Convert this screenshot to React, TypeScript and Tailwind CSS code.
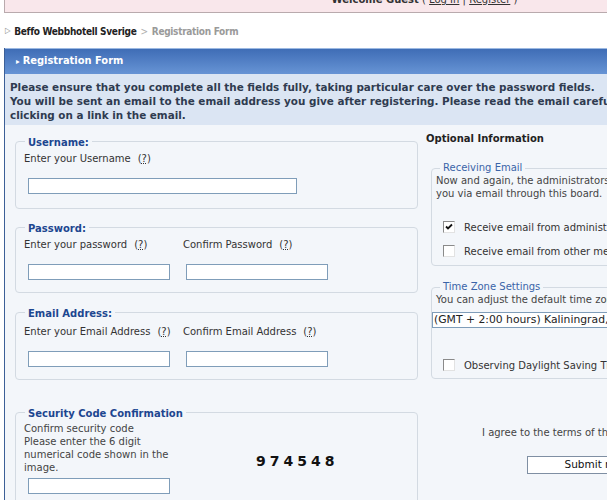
import React from 'react';

const font = { fontFamily: '"DejaVu Sans", Verdana, sans-serif' };
const condensed = { fontFamily: '"DejaVu Sans Condensed", "DejaVu Sans", sans-serif' };

const Help = () => (
  <span className="ml-[7px]">
    (<span className="underline decoration-dotted">?</span>)
  </span>
);

const TextInput: React.FC<{ className?: string }> = ({ className = '' }) => (
  <div className={`h-[16px] bg-white border border-[#7f9db9] ${className}`} />
);

const Box: React.FC<{ checked?: boolean }> = ({ checked }) => (
  <span className="inline-flex items-center justify-center w-[12px] h-[12px] bg-white border-t border-l border-[#8a8a8a] border-b-[#e2e2e2] border-r-[#e2e2e2] border-b border-r">
    {checked && (
      <svg width="8" height="8" viewBox="0 0 8 8">
        <path d="M1 3.5 L3 5.5 L7 1.5" stroke="#111" strokeWidth="1.8" fill="none" />
      </svg>
    )}
  </span>
);

const Fieldset: React.FC<{ title: string; className?: string; children: React.ReactNode }> = ({ title, className = '', children }) => (
  <fieldset className={`border border-[#d3dae2] rounded-[4px] px-[8px] ${className}`}>
    <legend className="ml-[1px] px-[3px] pt-[4px] leading-[12px] font-bold text-[#1d4690]">{title}</legend>
    {children}
  </fieldset>
);

const SubFieldset: React.FC<{ title: string; className?: string; children: React.ReactNode }> = ({ title, className = '', children }) => (
  <fieldset className={`border border-[#d3dae2] rounded-[4px] px-[4px] ${className}`}>
    <legend className="ml-[4px] px-[3px] leading-[12px] text-[#3a64a8]">{title}</legend>
    {children}
  </fieldset>
);

export default function App() {
  return (
    <div className="w-[607px] h-[500px] overflow-hidden bg-white text-[10px] text-[#333]" style={font}>
      <div className="w-[840px] ml-[4px]">
        <div className="h-[13px] overflow-hidden bg-[#f9e7eb] border-l border-b border-[#b9aaad] text-center">
          <div className="-mt-[6px] leading-[12px] text-[#333]">
            <b>Welcome Guest</b> ( <span className="underline">Log In</span> | <span className="underline">Register</span> )
          </div>
        </div>

        <div className="mt-[12px] h-[12px] flex items-center font-bold text-[10px] tracking-[-0.3px]" style={condensed}>
          <span className="text-[#888] text-[8px] mr-[4px] ml-[1px]">▷</span>
          <span className="text-[#222]">Beffo Webbhotell Sverige</span>
          <span className="text-[#b0b0b0] font-normal mx-[4px]">&gt;</span>
          <span className="text-[#9a9a9a]">Registration Form</span>
        </div>

        <div className="mt-[11px] border-l border-[#3c5f97]">
          <div className="h-[26px] flex items-center border-t border-[#9cb9e2] bg-gradient-to-b from-[#3f6db6] to-[#6794d5] text-white font-bold text-[11px]" style={condensed}>
            <span className="ml-[11px] mr-[3px] text-[8px]">▸</span>
            Registration Form
          </div>
          <div className="bg-[#dbe5f3] px-[5px] pt-[6px] pb-[3px] leading-[14px] font-bold text-[10.4px] text-[#2f3b50] whitespace-nowrap">
            <div>Please ensure that you complete all the fields fully, taking particular care over the password fields.</div>
            <div>You will be sent an email to the email address you give after registering. Please read the email carefully, you will need to activate your account by</div>
            <div>clicking on a link in the email.</div>
          </div>

          <div className="bg-[#f3f6fa] flex pb-[20px]">
            <div className="w-[403px] ml-[10px] mt-[8px] flex flex-col">
              <Fieldset title="Username:" className="pb-[14px]">
                <div className="mt-[4px] leading-[12px]">Enter your Username<Help /></div>
                <TextInput className="mt-[13px] ml-[4px] w-[269px]" />
              </Fieldset>

              <Fieldset title="Password:" className="mt-[10px] pb-[12px]">
                <div className="grid grid-cols-[159px_159px] mt-[4px] leading-[12px]">
                  <div>Enter your password<Help /></div>
                  <div>Confirm Password<Help /></div>
                </div>
                <div className="grid grid-cols-[159px_159px] mt-[13px]">
                  <TextInput className="ml-[4px] w-[142px]" />
                  <TextInput className="ml-[3px] w-[142px]" />
                </div>
              </Fieldset>

              <Fieldset title="Email Address:" className="mt-[11px] pb-[12px]">
                <div className="grid grid-cols-[159px_159px] mt-[6px] leading-[12px]">
                  <div>Enter your Email Address<Help /></div>
                  <div>Confirm Email Address<Help /></div>
                </div>
                <div className="grid grid-cols-[159px_159px] mt-[13px]">
                  <TextInput className="ml-[4px] w-[142px]" />
                  <TextInput className="ml-[3px] w-[142px]" />
                </div>
              </Fieldset>

              <Fieldset title="Security Code Confirmation" className="mt-[24px] pb-[14px]">
                <div className="flex mt-[2px]">
                  <div className="w-[150px] leading-[13px] text-[#444] whitespace-nowrap">
                    <div>Confirm security code</div>
                    <div>Please enter the 6 digit</div>
                    <div>numerical code shown in the</div>
                    <div>image.</div>
                  </div>
                  <div className="flex-1 flex items-end pl-[82px] pb-[5px]">
                    <span className="text-[14px] font-bold text-[#111] tracking-[4px] leading-[16px]">974548</span>
                  </div>
                </div>
                <TextInput className="mt-[4px] ml-[4px] w-[142px]" />
              </Fieldset>
            </div>

            <div className="ml-[8px] w-[330px] flex flex-col">
              <div className="mt-[8px] leading-[12px] font-bold text-[#222]">Optional Information</div>

              <SubFieldset title="Receiving Email" className="mt-[17px] ml-[5px] pb-[8px]">
                <div className="leading-[13px] text-[#444] whitespace-nowrap">
                  <div>Now and again, the administrators may wish to send</div>
                  <div>you via email through this board.</div>
                </div>
                <div className="mt-[21px] flex items-center gap-[9px] ml-[7px] h-[12px]">
                  <Box checked />
                  <span className="whitespace-nowrap">Receive email from administrators</span>
                </div>
                <div className="mt-[12px] flex items-center gap-[9px] ml-[7px] h-[12px]">
                  <Box />
                  <span className="whitespace-nowrap">Receive email from other members</span>
                </div>
              </SubFieldset>

              <SubFieldset title="Time Zone Settings" className="mt-[15px] ml-[5px] pb-[7px]">
                <div className="leading-[13px] text-[#444] whitespace-nowrap">You can adjust the default time zone setting for this board</div>
                <div className="mt-[6px] -ml-[4px] h-[16px] bg-white border border-[#7f9db9] flex items-center px-[1px] text-[10.8px] text-[#222] whitespace-nowrap">
                  (GMT + 2:00 hours) Kaliningrad, South Africa
                </div>
                <div className="mt-[31px] flex items-center gap-[9px] ml-[7px] h-[12px]">
                  <Box />
                  <span className="whitespace-nowrap">Observing Daylight Saving Time</span>
                </div>
              </SubFieldset>

              <div className="mt-[48px] ml-[56px] leading-[12px] text-[#444] whitespace-nowrap">I agree to the terms of this board</div>
              <div className="mt-[17px] ml-[101px] w-[196px] h-[18px] border border-[#7f8fa3] bg-white flex items-center justify-center text-[10.5px] text-[#111] whitespace-nowrap">
                Submit my registration
              </div>
            </div>
          </div>
        </div>
      </div>
    </div>
  );
}
